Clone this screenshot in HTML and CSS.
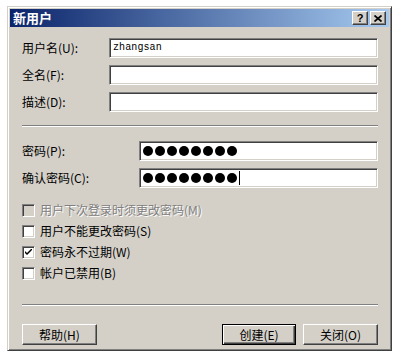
FILE: index.html
```html
<!DOCTYPE html>
<html lang="zh-CN">

<head>
    <meta charset="UTF-8">
    <title>新用户</title>
    <link rel="stylesheet" href="styles.css">
</head>

<body>
    <div class="window">
        <div class="titlebar">
            <span class="title">新用户</span>
            <div class="caption-btns">
                <span class="cap-btn">?</span>
                <span class="cap-btn">
                    <svg width="8" height="7" viewBox="0 0 8 7">
                        <path d="M0.5 0.5 L7.5 6.5 M7.5 0.5 L0.5 6.5" stroke="#000" stroke-width="1.7" fill="none"/>
                    </svg>
                </span>
            </div>
        </div>

        <div class="content">
            <div class="group names">
                <div class="row">
                    <span class="label">用户名(U):</span>
                    <div class="field"><span class="value">zhangsan</span></div>
                </div>
                <div class="row">
                    <span class="label">全名(F):</span>
                    <div class="field"></div>
                </div>
                <div class="row">
                    <span class="label">描述(D):</span>
                    <div class="field"></div>
                </div>
            </div>

            <div class="separator"></div>

            <div class="group passwords">
                <div class="row">
                    <span class="label wide">密码(P):</span>
                    <div class="field">
                        <span class="dots"><i></i><i></i><i></i><i></i><i></i><i></i><i></i><i></i></span>
                    </div>
                </div>
                <div class="row">
                    <span class="label wide">确认密码(C):</span>
                    <div class="field">
                        <span class="dots"><i></i><i></i><i></i><i></i><i></i><i></i><i></i><i></i></span>
                        <span class="caret"></span>
                    </div>
                </div>
            </div>

            <div class="checks">
                <div class="check disabled"><span class="box"></span>用户下次登录时须更改密码(M)</div>
                <div class="check"><span class="box"></span>用户不能更改密码(S)</div>
                <div class="check">
                    <span class="box">
                        <svg width="7" height="7" viewBox="0 0 7 7">
                            <path d="M0 2 L0 4 L2 6 L7 1 L7 -1 L2 4 Z" fill="#000"/>
                        </svg>
                    </span>密码永不过期(W)
                </div>
                <div class="check"><span class="box"></span>帐户已禁用(B)</div>
            </div>

            <div class="separator"></div>

            <div class="buttons">
                <span class="btn">帮助(H)</span>
                <span class="spacer"></span>
                <span class="btn default">创建(E)</span>
                <span class="btn">关闭(O)</span>
            </div>
        </div>
    </div>
</body>

</html>
```

FILE: styles.css
```css
* {
    margin: 0;
    padding: 0;
    box-sizing: border-box;
}

body {
    background: #fff;
    font-family: "Noto Sans CJK SC", sans-serif;
    font-size: 12px;
    line-height: 14px;
    color: #000;
}

.window {
    width: 385px;
    height: 345px;
    margin: 6px 0 0 7px;
    padding: 2px;
    background: #d4d0c8;
    border: 1px solid;
    border-color: #d4d0c8 #404040 #404040 #d4d0c8;
    box-shadow: inset 1px 1px #fff, inset -1px -1px #808080;
    display: flex;
    flex-direction: column;
}

.titlebar {
    height: 18px;
    display: flex;
    align-items: center;
    padding: 0 3px 0 3px;
    background: linear-gradient(to right, #0a246a, #a6caf0);
}

.title {
    color: #fff;
    font-weight: bold;
    font-size: 13px;
    flex: 1;
}

.caption-btns {
    display: flex;
    gap: 2px;
}

.cap-btn {
    width: 16px;
    height: 14px;
    background: #d4d0c8;
    border: 1px solid;
    border-color: #fff #404040 #404040 #fff;
    box-shadow: inset -1px -1px #808080;
    display: flex;
    align-items: center;
    justify-content: center;
    font-family: "Liberation Sans", sans-serif;
    font-weight: bold;
    font-size: 11px;
    line-height: 11px;
}

.content {
    flex: 1;
    padding: 11px 11px 0 12px;
}

.group {
    display: flex;
    flex-direction: column;
    gap: 7px;
}

.row {
    display: flex;
    align-items: center;
    height: 20px;
}

.label {
    width: 87px;
    flex-shrink: 0;
    padding-left: 0;
}

.label.wide {
    width: 117px;
}

.field {
    flex: 1;
    height: 20px;
    background: #fff;
    border: 1px solid;
    border-color: #808080 #fff #fff #808080;
    box-shadow: inset 1px 1px #404040, inset -1px -1px #d4d0c8;
    display: flex;
    align-items: center;
    padding-left: 3px;
}

.value {
    font-family: "Liberation Mono", monospace;
    font-size: 10px;
    letter-spacing: 0.1px;
}

.dots {
    display: flex;
    gap: 2px;
}

.dots i {
    width: 10px;
    height: 10px;
    border-radius: 50%;
    background: #000;
}

.caret {
    width: 1px;
    height: 14px;
    background: #000;
    margin-left: 2px;
}

.separator {
    height: 2px;
    border-top: 1px solid #808080;
    border-bottom: 1px solid #fff;
}

.names {
    margin-bottom: 13px;
}

.passwords {
    margin-top: 14px;
}

.checks {
    margin-top: 12px;
    margin-bottom: 21px;
    display: flex;
    flex-direction: column;
    gap: 1px;
}

.check {
    height: 20px;
    display: flex;
    align-items: center;
}

.box {
    width: 13px;
    height: 13px;
    margin-right: 5px;
    background: #fff;
    border: 1px solid;
    border-color: #808080 #fff #fff #808080;
    box-shadow: inset 1px 1px #404040, inset -1px -1px #d4d0c8;
    display: flex;
    align-items: center;
    justify-content: center;
}

.check.disabled {
    color: #808080;
    text-shadow: 1px 1px #fff;
}

.check.disabled .box {
    background: #d4d0c8;
}

.buttons {
    margin-top: 18px;
    display: flex;
    gap: 7px;
}

.spacer {
    flex: 1;
}

.btn {
    width: 75px;
    height: 21px;
    display: flex;
    align-items: center;
    justify-content: center;
    border: 1px solid;
    border-color: #fff #404040 #404040 #fff;
    box-shadow: inset -1px -1px #808080;
}

.btn.default {
    border-color: #000;
    box-shadow: inset 1px 1px #fff, inset -1px -1px #404040, inset -2px -2px #808080;
    width: 74px;
}
```
